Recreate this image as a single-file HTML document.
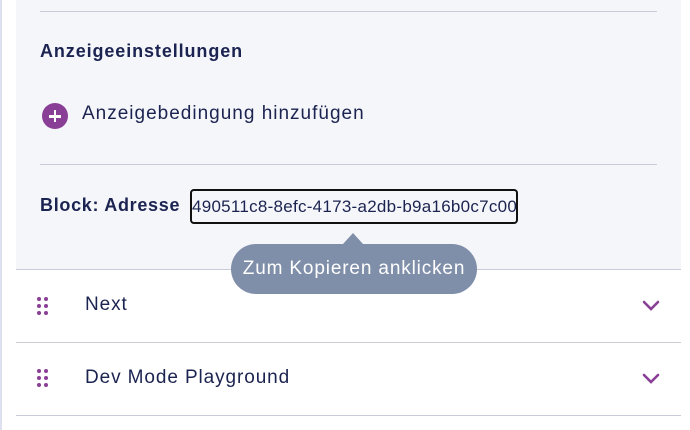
<!DOCTYPE html>
<html><head><meta charset="utf-8"><style>
*{margin:0;padding:0;box-sizing:border-box}
body{width:690px;height:430px;overflow:hidden;background:#fff;font-family:"Liberation Sans",sans-serif;color:#1b2350;position:relative}
.lb{position:absolute;left:0;top:0;width:2px;height:430px;background:#dde0ee}
.panel{position:absolute;left:16px;top:0;width:665px;height:269px;background:#f5f6fa}
.hr{position:absolute;height:1px;background:#c9cbd6}
.t{position:absolute;white-space:nowrap}
.dots{position:absolute;width:12px;height:18px}
.dots i{position:absolute;width:4px;height:4px;border-radius:50%;background:#8a3f96}
</style></head><body>
<div class="lb"></div>
<div class="panel"></div>
<div class="hr" style="left:40px;top:11px;width:617px"></div>
<div class="t" style="left:40px;top:41px;font-size:18px;font-weight:bold;letter-spacing:0.9px">Anzeigeeinstellungen</div>
<div style="position:absolute;left:42px;top:103px;width:26px;height:26px;border-radius:50%;background:#8a3f96"></div>
<div style="position:absolute;left:49px;top:115px;width:12px;height:2.5px;background:#fff"></div>
<div style="position:absolute;left:53.8px;top:110px;width:2.5px;height:12px;background:#fff"></div>
<div class="t" style="left:82px;top:103px;font-size:19px;letter-spacing:1px">Anzeigebedingung hinzufügen</div>
<div class="hr" style="left:40px;top:164px;width:617px"></div>
<div class="t" style="left:40px;top:195px;font-size:18px;font-weight:bold;letter-spacing:0.7px">Block: Adresse</div>
<div style="position:absolute;left:190px;top:189px;width:328px;height:35px;border:2px solid #111;border-radius:4px"></div>
<div class="t" style="left:192px;top:197px;font-size:17px;letter-spacing:0.27px">490511c8-8efc-4173-a2db-b9a16b0c7c00</div>
<div style="position:absolute;left:343px;top:233px;width:0;height:0;border-left:10px solid transparent;border-right:10px solid transparent;border-bottom:11px solid #7f8ea9"></div>
<div class="hr" style="left:16px;top:269px;width:665px"></div>
<div style="position:absolute;left:231px;top:244px;width:246px;height:50px;border-radius:25px;background:#7f8ea9"></div>
<div class="t" style="left:231px;top:258px;width:246px;text-align:center;font-size:19px;letter-spacing:0.85px;color:#fff">Zum Kopieren anklicken</div>
<div class="dots" style="left:37px;top:297px"><i style="left:0;top:0"></i><i style="left:7px;top:0"></i><i style="left:0;top:7px"></i><i style="left:7px;top:7px"></i><i style="left:0;top:14px"></i><i style="left:7px;top:14px"></i></div>
<div class="t" style="left:85px;top:294px;font-size:19px;letter-spacing:0.9px">Next</div>
<svg style="position:absolute;left:641px;top:299px" width="20" height="14"><path d="M3 3 L10 10 L17 3" fill="none" stroke="#8a3f96" stroke-width="2.6" stroke-linecap="round"/></svg>
<div class="hr" style="left:16px;top:342px;width:665px"></div>
<div class="dots" style="left:37px;top:369px"><i style="left:0;top:0"></i><i style="left:7px;top:0"></i><i style="left:0;top:7px"></i><i style="left:7px;top:7px"></i><i style="left:0;top:14px"></i><i style="left:7px;top:14px"></i></div>
<div class="t" style="left:85px;top:367px;font-size:19px;letter-spacing:0.9px">Dev Mode Playground</div>
<svg style="position:absolute;left:641px;top:372px" width="20" height="14"><path d="M3 3 L10 10 L17 3" fill="none" stroke="#8a3f96" stroke-width="2.6" stroke-linecap="round"/></svg>
<div class="hr" style="left:16px;top:415px;width:665px"></div>
</body></html>
